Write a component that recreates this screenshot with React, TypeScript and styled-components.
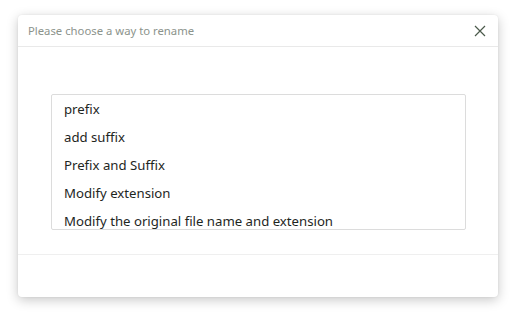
import React from "react";
import styled, { createGlobalStyle } from "styled-components";

const GlobalStyle = createGlobalStyle`
  html, body {
    margin: 0;
    padding: 0;
    background: #ffffff;
  }
  body {
    font-family: "Noto Sans", "Open Sans", sans-serif;
  }
`;

const options = [
  "prefix",
  "add suffix",
  "Prefix and Suffix",
  "Modify extension",
  "Modify the original file name and extension",
];

const App = () => {
  return (
    <>
      <GlobalStyle />
      <Page>
        <Dialog>
          <Header>
            <Title>Please choose a way to rename</Title>
            <Close aria-label="close">
              <svg width="12" height="12" viewBox="0 0 12 12">
                <path d="M1 1L11 11M11 1L1 11" stroke="#4b5a4b" strokeWidth="1.2" />
              </svg>
            </Close>
          </Header>
          <Body>
            <ListBox>
              {options.map((item) => (
                <Option key={item}>{item}</Option>
              ))}
            </ListBox>
          </Body>
          <Footer />
        </Dialog>
      </Page>
    </>
  );
};

const Page = styled.div`
  width: 516px;
  height: 319px;
  padding: 15px 18px 0 18px;
  box-sizing: border-box;
`;

const Dialog = styled.div`
  width: 480px;
  height: 282px;
  background: #fff;
  border-radius: 4px;
  box-shadow: 0 3px 12px rgba(0, 0, 0, 0.22), 0 0 2px rgba(0, 0, 0, 0.08);
  display: flex;
  flex-direction: column;
  overflow: hidden;
`;

const Header = styled.div`
  height: 31px;
  border-bottom: 1px solid #e9e9e9;
  display: flex;
  align-items: center;
  justify-content: space-between;
  padding: 0 12px 0 10px;
  flex-shrink: 0;
`;

const Title = styled.span`
  font-size: 11.3px;
  color: #8c938c;
`;

const Close = styled.button`
  border: none;
  background: none;
  padding: 0;
  display: flex;
  cursor: pointer;
`;

const Body = styled.div`
  flex: 1;
  padding: 47px 32px 0 33px;
  border-bottom: 1px solid #efefef;
`;

const ListBox = styled.div`
  height: 134px;
  border: 1px solid #dcdcdc;
  border-radius: 2px;
  overflow: hidden;
`;

const Option = styled.div`
  height: 28px;
  line-height: 28px;
  padding: 0 12px;
  font-size: 13.2px;
  color: #1e261e;
  white-space: nowrap;
`;

const Footer = styled.div`
  height: 42px;
  flex-shrink: 0;
`;

export default App;
